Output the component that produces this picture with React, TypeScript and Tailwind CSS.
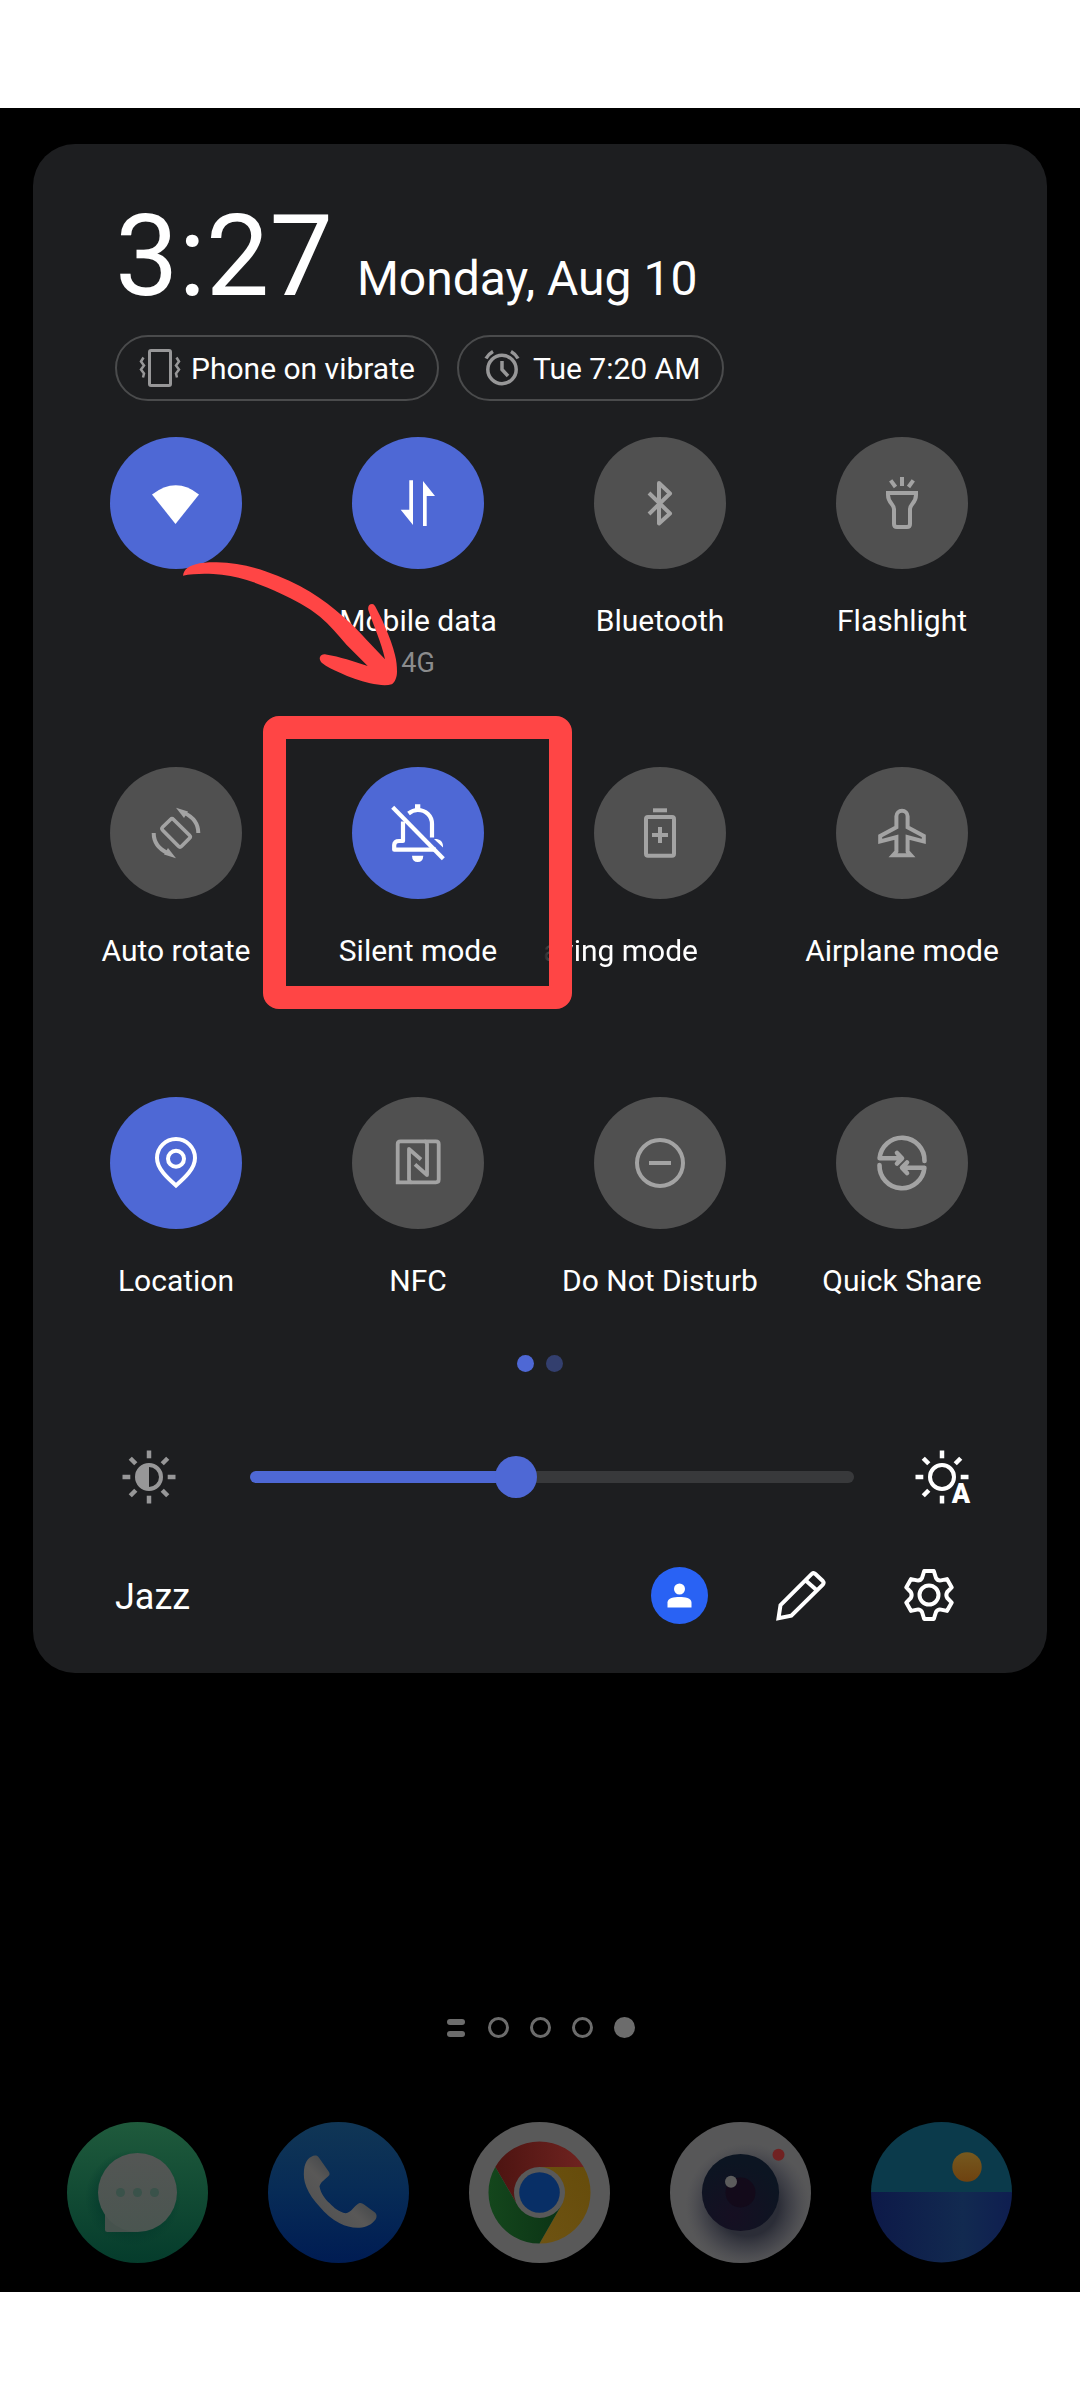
import { useState } from 'react';
import type { ReactNode } from 'react';
import clsx from 'clsx';

interface Tile {
  id: string;
  label: string;
  sub?: string;
  active?: boolean;
  hideLabel?: boolean;
  scrolling?: boolean;
  overlay?: ReactNode;
  icon: ReactNode;
}

function ArrowMark() {
  return (
    <svg
      viewBox="0 0 220 130"
      className="pointer-events-none absolute left-[125px] top-[123px] h-[130px] w-[220px]"
      fill="#ff4545"
      aria-hidden="true"
    >
      <path d="M3 15.7C4 9 9 6 15 4.5C22 2.5 29 2.2 36.7 2.3C54 2.8 71 6 86.7 11.7C102 17 117 23.500 130 31.700C142 39 153 47.500 163.300 56.700C172 64 180 72.500 186.700 80L205 99.300C201 81 194 67 188.300 50C187.500 46 189.500 44 192 44C194 44 195 46 195.800 47.500C199 54 202.500 60 205 66.700C209 76 213 86 215 95C216.500 101 217 106 217 111.700C217 117 215 122.500 211.700 124.300C206 126 198 125 190 123.300C180 121 169 117 160 112.700C153 109.500 147 107 141.700 102.700C139.500 100 139.500 98.500 140 97C141 94.800 143 94 146 94.500C153 95.500 160 97.500 166.700 99.300L187.700 106L166.700 85C158 75 150 65 140 56.700C128 47 114 40 100 33.300C89 28 78 23.500 66.700 20C56 17 45 14.500 33.300 14C26 13.600 19 13.700 13.300 14.300C9 14.600 6 15 3 15.700Z" />
    </svg>
  );
}

function FrameMark() {
  return (
    <span
      className="pointer-events-none absolute -left-[34px] -top-[51px] h-[293px] w-[309px] rounded-[16px] border-[23px] border-[#ff4545]"
      aria-hidden="true"
    />
  );
}

const TILES: Tile[] = [
  {
    id: 'wifi',
    label: 'Wi-Fi',
    active: true,
    hideLabel: true,
    overlay: <ArrowMark />,
    icon: <path d="M6 21.500Q30 3 53 21.500L29.500 51Z" fill="currentColor" />,
  },
  {
    id: 'data',
    label: 'Mobile data',
    sub: '4G',
    active: true,
    icon: (
      <g fill="currentColor">
        <path d="M21.300 7.300H25V52L12.700 36.700H21.300Z" />
        <path d="M35 8L47 23H38.700V53H35Z" />
      </g>
    ),
  },
  {
    id: 'bluetooth',
    label: 'Bluetooth',
    icon: <path d="M19 20L40 40.500L29 50.500V10L40 20.500L19 41" stroke="currentColor" strokeWidth="4" strokeLinejoin="round" />,
  },
  {
    id: 'flashlight',
    label: 'Flashlight',
    icon: (
      <g stroke="currentColor" strokeWidth="4">
        <path d="M30 4V13M18.700 7.300L23.500 14M41.300 7.300L36.500 14" />
        <path d="M16 20H44V22C44 30 38 31 38 36V51Q38 54 35 54H25Q22 54 22 51V36C22 31 16 30 16 22Z" />
      </g>
    ),
  },
  {
    id: 'rotate',
    label: 'Auto rotate',
    icon: (
      <g stroke="currentColor" strokeWidth="4">
        <path
          d="M16.700 24L24.500 16.500Q26 15 27.500 16.500L43.500 32.300Q45 33.800 43.500 35.300L35.500 43.300Q34 44.800 32.500 43.300L16.700 27.200Q15 25.600 16.700 24Z"
          strokeWidth="3.700"
        />
        <path d="M52.300 30C52.300 22 48 14.500 38.500 10" />
        <path d="M30 4.700L42 8.500L38 15Z" fill="currentColor" stroke="none" />
        <path d="M7.700 30C7.700 38 12 45.500 21.500 50" />
        <path d="M30 55.300L18 51.500L22 45Z" fill="currentColor" stroke="none" />
      </g>
    ),
  },
  {
    id: 'silent',
    label: 'Silent mode',
    active: true,
    overlay: <FrameMark />,
    icon: (
      <g stroke="currentColor" strokeWidth="4.200">
        <path d="M4.700 4.300L55.300 55.700" />
        <path d="M20.500 10.500C23 8.500 26 7 29.700 7C38 7 44 13 44 21V34.500" />
        <path d="M15 18.500V38H11Q6.200 38 6.200 42V46.700H48" strokeLinejoin="round" />
        <path d="M27 1.300H32.300V6H27ZM46 36C51 35.500 55 38 55 43V44.500ZM24 52.700H35.300Q35 59 29.700 59Q24.300 59 24 52.700Z" fill="currentColor" stroke="none" />
      </g>
    ),
  },
  {
    id: 'saving',
    label: 'aving mode',
    scrolling: true,
    icon: (
      <g stroke="currentColor" strokeWidth="4">
        <path d="M23 7.300H37" />
        <rect x="16" y="14" width="28" height="38.700" rx="2" />
        <path d="M30 24V40M22 32H38" />
      </g>
    ),
  },
  {
    id: 'airplane',
    label: 'Airplane mode',
    icon: (
      <path
        d="M24.400 13.300A5.600 5.600 0 0 1 35.600 13.300V24.300L51.800 33V38.500L35.600 34.200V48.500L39 52.300H21L24.400 48.500V34.200L8.200 38.500V33L24.400 24.300Z"
        stroke="currentColor"
        strokeWidth="4"
      />
    ),
  },
  {
    id: 'location',
    label: 'Location',
    active: true,
    icon: (
      <g stroke="currentColor" strokeWidth="4">
        <path d="M30 52.500C22 45.500 11 36 11 25A19 19 0 0 1 49 25C49 36 38 45.500 30 52.500Z" />
        <circle cx="30" cy="25.700" r="8" />
      </g>
    ),
  },
  {
    id: 'nfc',
    label: 'NFC',
    icon: (
      <g stroke="currentColor" strokeWidth="3.800">
        <path d="M9.700 49.300V11Q9.700 8.300 12.400 8.300H48Q50.700 8.300 50.700 11V46.600Q50.700 49.300 48 49.300Z" />
        <path d="M23.500 49.300Q21 49 21 46V16L33 26.500M36.500 8.300Q39 8.500 39 11V42L27 31.300" strokeLinejoin="round" />
      </g>
    ),
  },
  {
    id: 'dnd',
    label: 'Do Not Disturb',
    icon: (
      <g stroke="currentColor" strokeWidth="4">
        <circle cx="30" cy="30" r="23" />
        <path d="M19 30H41" />
      </g>
    ),
  },
  {
    id: 'share',
    label: 'Quick Share',
    icon: (
      <g stroke="currentColor" strokeWidth="4.600" strokeLinecap="round" strokeLinejoin="round">
        <path d="M52.500 28A22.500 22.500 0 0 0 7.600 25.300H29M25 20L30 25.300L25 30.500" />
        <path d="M7.500 32A22.500 22.500 0 0 0 52.400 34.700H31M35 29.500L30 34.700L35 40" />
      </g>
    ),
  },
];

const RAYS = [0, 45, 90, 135, 180, 225, 270, 315];

function SunIcon({ auto }: { auto?: boolean }) {
  return (
    <svg viewBox="0 0 54 54" className="size-[54px] overflow-visible" fill="none" aria-hidden="true">
      <g stroke="currentColor" strokeWidth="4.500">
        <circle cx="27" cy="27" r="12" strokeWidth="4" />
        {RAYS.filter((r) => !auto || r !== 135).map((r) => (
          <path key={r} d="M27 0.500V8.300" transform={`rotate(${r} 27 27)`} />
        ))}
      </g>
      {auto ? (
        <text
          x="46"
          y="53"
          textAnchor="middle"
          fill="currentColor"
          stroke="#1d1e20"
          strokeWidth="3"
          paintOrder="stroke"
          className="font-['Roboto',sans-serif] text-[27px] font-black"
        >
          A
        </text>
      ) : (
        <path d="M27 15A12 12 0 0 0 27 39Z" fill="currentColor" />
      )}
    </svg>
  );
}

function VibrateIcon() {
  return (
    <svg viewBox="0 0 42 42" className="size-[42px] text-[#979798]" fill="none" stroke="currentColor" aria-hidden="true">
      <rect x="10.500" y="3.500" width="21" height="35" rx="1.500" strokeWidth="3" />
      <path
        d="M4.500 10.500L2 14.500L5 18.500L2 22.500L5 26.500L4 30.500M37.500 10.500L40 14.500L37 18.500L40 22.500L37 26.500L38 30.500"
        strokeWidth="2.500"
      />
    </svg>
  );
}

function AlarmIcon() {
  return (
    <svg viewBox="0 0 42 42" className="size-[42px] text-[#979798]" fill="none" stroke="currentColor" strokeWidth="3.500" aria-hidden="true">
      <circle cx="21" cy="22.500" r="14.200" />
      <path d="M21 14V22.500L27 29" />
      <path d="M5 11.500Q7.500 7 12 4.500M37 11.500Q34.500 7 30 4.500" />
    </svg>
  );
}

function QuickTile({ tile, active, onToggle }: { tile: Tile; active: boolean; onToggle: () => void }) {
  return (
    <li className={clsx('flex justify-center', tile.overlay && 'relative z-10')}>
      <button
        type="button"
        aria-pressed={active}
        aria-label={tile.hideLabel ? tile.label : undefined}
        onClick={onToggle}
        className="flex flex-col items-center"
      >
        <span
          className={clsx(
            'flex size-[132px] items-center justify-center rounded-full',
            active ? 'bg-[#4e68d5] text-white' : 'bg-[#505050] text-[#a3a3a3]'
          )}
        >
          <svg viewBox="0 0 60 60" className="size-[60px]" fill="none" aria-hidden="true">
            {tile.icon}
          </svg>
        </span>
        {!tile.hideLabel && (
          <span
            className={clsx(
              'mt-[34px] whitespace-nowrap text-[30px] leading-[36px] text-white',
              tile.scrolling &&
                'w-[234px] overflow-hidden text-left [mask-image:linear-gradient(to_right,transparent,black_32px)]'
            )}
          >
            {tile.label}
          </span>
        )}
        {tile.sub && <span className="mt-2 text-[27px] leading-[32px] text-[#8b8c8d]">{tile.sub}</span>}
      </button>
      {tile.overlay}
    </li>
  );
}

function MessagesIcon() {
  return (
    <>
      <defs>
        <linearGradient id="msg-bg" x1="0" y1="0" x2="0" y2="1">
          <stop offset="0" stopColor="#1f5a3c" />
          <stop offset="1" stopColor="#053c2c" />
        </linearGradient>
        <linearGradient id="msg-bubble" x1="0" y1="0" x2="0" y2="1">
          <stop offset="0" stopColor="#535654" />
          <stop offset="1" stopColor="#4a5550" />
        </linearGradient>
        <radialGradient id="msg-shade">
          <stop offset="0.700" stopColor="#03382b" stopOpacity="0.600" />
          <stop offset="1" stopColor="#03382b" stopOpacity="0" />
        </radialGradient>
      </defs>
      <circle cx="70.500" cy="70.500" r="70.500" fill="url(#msg-bg)" />
      <circle cx="66" cy="76" r="48" fill="url(#msg-shade)" />
      <path d="M38 90V107.500Q38 110 40.500 110H70.500Z" fill="#46524d" />
      <circle cx="70.500" cy="70.500" r="39.500" fill="url(#msg-bubble)" />
      <g fill="#3a524a">
        <circle cx="53.500" cy="70.500" r="4.500" />
        <circle cx="70.500" cy="70.500" r="4.500" />
        <circle cx="87.500" cy="70.500" r="4.500" />
      </g>
    </>
  );
}

function PhoneIcon() {
  return (
    <>
      <defs>
        <linearGradient id="tel-bg" x1="0" y1="0" x2="0" y2="1">
          <stop offset="0" stopColor="#103655" />
          <stop offset="0.500" stopColor="#072b56" />
          <stop offset="1" stopColor="#001c53" />
        </linearGradient>
        <linearGradient id="tel-body" x1="1" y1="0" x2="0" y2="1">
          <stop offset="0.300" stopColor="#3d4247" />
          <stop offset="0.550" stopColor="#595857" />
          <stop offset="1" stopColor="#4d4e50" />
        </linearGradient>
      </defs>
      <circle cx="70.500" cy="70.500" r="70.500" fill="url(#tel-bg)" />
      <path
        d="M40 37.300C43 34 48.500 31.500 51 35.700L61 50C62 52 61.500 53 60.500 54C57 57.500 52.500 60 51.500 64.500C53 72 57 77 61.700 81.300C66 86 71 90 77.700 91.300C83 91 87 83 91 81.300C93 80.500 94.500 81.500 96 82.500L107 90.500C109 92.500 109 95 107.700 97.300C104 102.500 98 105.500 91.700 105.700C84 106 78 104.500 71.700 101.300C64 97 57 91.500 51.700 84.700C46 78.500 41 72 38.300 64.700C36 59 35.500 54 36 48C36.500 43 38 40 40 37.300Z"
        fill="url(#tel-body)"
      />
    </>
  );
}

function ChromeIcon() {
  return (
    <>
      <defs>
        <linearGradient id="chr-red">
          <stop offset="0" stopColor="#4d1411" />
          <stop offset="1" stopColor="#6f2320" />
        </linearGradient>
        <linearGradient id="chr-green">
          <stop offset="0" stopColor="#14461c" />
          <stop offset="1" stopColor="#0b3415" />
        </linearGradient>
        <linearGradient id="chr-yellow" x1="1" y1="0" x2="0" y2="1">
          <stop offset="0" stopColor="#664c0b" />
          <stop offset="1" stopColor="#6e5312" />
        </linearGradient>
      </defs>
      <circle cx="70.500" cy="70.500" r="70.500" fill="#595959" />
      <path d="M26.300 45A51 51 0 0 1 114.700 45H70.500L48.600 83.200Z" fill="url(#chr-red)" />
      <path d="M114.700 45A51 51 0 0 1 70.500 121.500L92.400 83.200L70.500 45Z" fill="url(#chr-yellow)" />
      <path d="M70.500 121.500A51 51 0 0 1 26.300 45L48.600 83.200L92.400 83.200Z" fill="url(#chr-green)" />
      <circle cx="70.500" cy="70.500" r="25.500" fill="#595959" />
      <circle cx="70.500" cy="70.500" r="20.300" fill="#082f66" />
    </>
  );
}

function CameraIcon() {
  return (
    <>
      <defs>
        <radialGradient id="cam-shade" cx="0.550" cy="0.590" r="0.440">
          <stop offset="0.500" stopColor="#2b2d37" />
          <stop offset="0.750" stopColor="#3e3f47" stopOpacity="0.700" />
          <stop offset="1" stopColor="#4a4a50" stopOpacity="0" />
        </radialGradient>
        <radialGradient id="cam-lens" cx="0.400" cy="0.800" r="0.700">
          <stop offset="0" stopColor="#160f22" />
          <stop offset="1" stopColor="#0c1522" />
        </radialGradient>
      </defs>
      <circle cx="70.500" cy="70.500" r="70.500" fill="#575758" />
      <circle cx="70.500" cy="70.500" r="70.500" fill="url(#cam-shade)" />
      <circle cx="70.500" cy="70.500" r="38.600" fill="url(#cam-lens)" />
      <circle cx="70.500" cy="70.500" r="15" fill="#130a1a" />
      <circle cx="61" cy="59.700" r="6" fill="#5c5c5c" />
      <circle cx="108.500" cy="32.700" r="6" fill="#702222" />
    </>
  );
}

function GalleryIcon() {
  return (
    <>
      <defs>
        <linearGradient id="gal-sea">
          <stop offset="0" stopColor="#0d1948" />
          <stop offset="0.650" stopColor="#122a50" />
          <stop offset="1" stopColor="#0f1e50" />
        </linearGradient>
        <linearGradient id="gal-sun" x1="0" y1="0" x2="0" y2="1">
          <stop offset="0" stopColor="#75591f" />
          <stop offset="1" stopColor="#6e4210" />
        </linearGradient>
      </defs>
      <path d="M0 70.500A70.500 70.500 0 0 1 141 70.500Z" fill="#0b3a4b" />
      <path d="M0 70A70.500 70.500 0 0 0 141 70Z" fill="url(#gal-sea)" />
      <circle cx="96" cy="45" r="14.700" fill="url(#gal-sun)" />
    </>
  );
}

const DOCK = [
  { name: 'Messages', icon: <MessagesIcon /> },
  { name: 'Phone', icon: <PhoneIcon /> },
  { name: 'Chrome', icon: <ChromeIcon /> },
  { name: 'Camera', icon: <CameraIcon /> },
  { name: 'Gallery', icon: <GalleryIcon /> },
];

export default function App() {
  const [toggled, setToggled] = useState<string[]>(TILES.filter((t) => t.active).map((t) => t.id));
  const [brightness, setBrightness] = useState(111);

  const toggle = (id: string) =>
    setToggled((prev) => (prev.includes(id) ? prev.filter((t) => t !== id) : [...prev, id]));

  const fill = `${Math.round((brightness / 255) * 100)}%`;

  return (
    <div className="bg-white py-[108px] font-['Roboto',sans-serif]">
      <main className="bg-black pb-[29px] pt-9">
        <section className="mx-[33px] rounded-[42px] bg-[#1d1e20] pb-[49px] pt-14 text-white">
          <header className="px-[82px]">
            <div className="flex items-baseline gap-6">
              <time className="text-[113px] leading-[114px]">3:27</time>
              <span className="text-[48px] leading-[48px]">Monday, Aug 10</span>
            </div>
            <div className="mt-[21px] flex gap-[18px] text-[30px]">
              <div className="flex h-[66px] items-center gap-[10px] rounded-full border-2 border-[#4a4b4c] px-[22px]">
                <VibrateIcon />
                <span>Phone on vibrate</span>
              </div>
              <div className="flex h-[66px] items-center gap-[10px] rounded-full border-2 border-[#4a4b4c] px-[22px]">
                <AlarmIcon />
                <span>Tue 7:20 AM</span>
              </div>
            </div>
          </header>

          <ul className="mt-9 grid auto-rows-[242px] grid-cols-4 gap-y-[88px] pl-[22px] pr-6">
            {TILES.map((tile) => (
              <QuickTile
                key={tile.id}
                tile={tile}
                active={toggled.includes(tile.id)}
                onToggle={() => toggle(tile.id)}
              />
            ))}
          </ul>

          <div className="mt-4 flex justify-center gap-3">
            <span className="size-[17px] rounded-full bg-[#4e68d5]" />
            <span className="size-[17px] rounded-full bg-[#333f6e]" />
          </div>

          <div className="mt-[78px] flex items-center pl-[89px] pr-[78px]">
            <span className="text-[#979798]">
              <SunIcon />
            </span>
            <input
              type="range"
              min={0}
              max={255}
              value={brightness}
              onChange={(e) => setBrightness(Number(e.target.value))}
              aria-label="Brightness"
              style={{ backgroundImage: `linear-gradient(to right, #4e68d5 ${fill}, #38393b ${fill})` }}
              className="ml-[74px] mr-[61px] h-3 min-w-0 flex-1 appearance-none rounded-full [&::-webkit-slider-thumb]:size-[42px] [&::-webkit-slider-thumb]:appearance-none [&::-webkit-slider-thumb]:rounded-full [&::-webkit-slider-thumb]:bg-[#4e68d5]"
            />
            <button type="button" aria-label="Auto brightness">
              <SunIcon auto />
            </button>
          </div>

          <footer className="mt-[62px] flex h-[58px] items-center pl-[82px] pr-[93px]">
            <span className="flex-1 pt-1 text-[36px] leading-[44px]">Jazz</span>
            <div className="flex items-center gap-[68px]">
              <button type="button" aria-label="User">
                <svg viewBox="0 0 57 57" className="size-[57px]" aria-hidden="true">
                  <circle cx="28.500" cy="28.500" r="28.500" fill="#2962f4" />
                  <circle cx="28.500" cy="22" r="5.500" fill="#fff" />
                  <path d="M16.500 40.500V35.500C16.500 31 23 30 28.500 30S40.500 31 40.500 35.500V40.500Z" fill="#fff" />
                </svg>
              </button>
              <button type="button" aria-label="Edit" className="mr-[10px]">
                <svg viewBox="0 0 50 54" className="h-[54px] w-[50px]" fill="none" stroke="currentColor" strokeWidth="4" aria-hidden="true">
                  <path d="M2.500 50.300L4.500 37.200L35.800 5.900Q37.600 4.300 39.400 6L46.800 13Q48.400 14.800 46.800 16.600L15.300 47.600Z" />
                  <path d="M30 12.700L40.500 22" />
                </svg>
              </button>
              <button type="button" aria-label="Settings">
                <svg viewBox="-25 -27 50 54" className="h-[54px] w-[50px] overflow-visible" fill="none" stroke="currentColor" strokeWidth="4" strokeLinejoin="round" aria-hidden="true">
                  <circle r="9.500" />
                  <path d="M-4.800 -24H4.800L7 -17Q8.700 -14 12 -14.600L17.950 -15.900L22.750 -7.600L18.200 -3Q16.500 0 18.200 3L22.750 7.600L17.950 15.900L12 14.600Q8.700 14 7 17L4.800 24H-4.800L-7 17Q-8.700 14 -12 14.600L-17.950 15.900L-22.750 7.600L-18.200 3Q-16.500 0 -18.200 -3L-22.750 -7.600L-17.950 -15.900L-12 -14.600Q-8.700 -14 -7 -17Z" />
                </svg>
              </button>
            </div>
          </footer>
        </section>

        <div className="mt-[344px] flex justify-center gap-[21px]">
          <span className="flex size-[21px] flex-col items-center justify-center gap-[6px]">
            <span className="h-[6px] w-[18px] rounded-full bg-[#6c6c6c]" />
            <span className="h-[6px] w-[18px] rounded-full bg-[#6c6c6c]" />
          </span>
          <span className="size-[21px] rounded-full border-3 border-[#6c6c6c]" />
          <span className="size-[21px] rounded-full border-3 border-[#6c6c6c]" />
          <span className="size-[21px] rounded-full border-3 border-[#6c6c6c]" />
          <span className="size-[21px] rounded-full bg-[#6c6c6c]" />
        </div>

        <nav className="mt-[84px] flex justify-between pl-[67px] pr-[68px]">
          {DOCK.map((app) => (
            <button key={app.name} type="button" aria-label={app.name}>
              <svg viewBox="0 0 141 141" className="size-[141px]" aria-hidden="true">
                {app.icon}
              </svg>
            </button>
          ))}
        </nav>
      </main>
    </div>
  );
}
